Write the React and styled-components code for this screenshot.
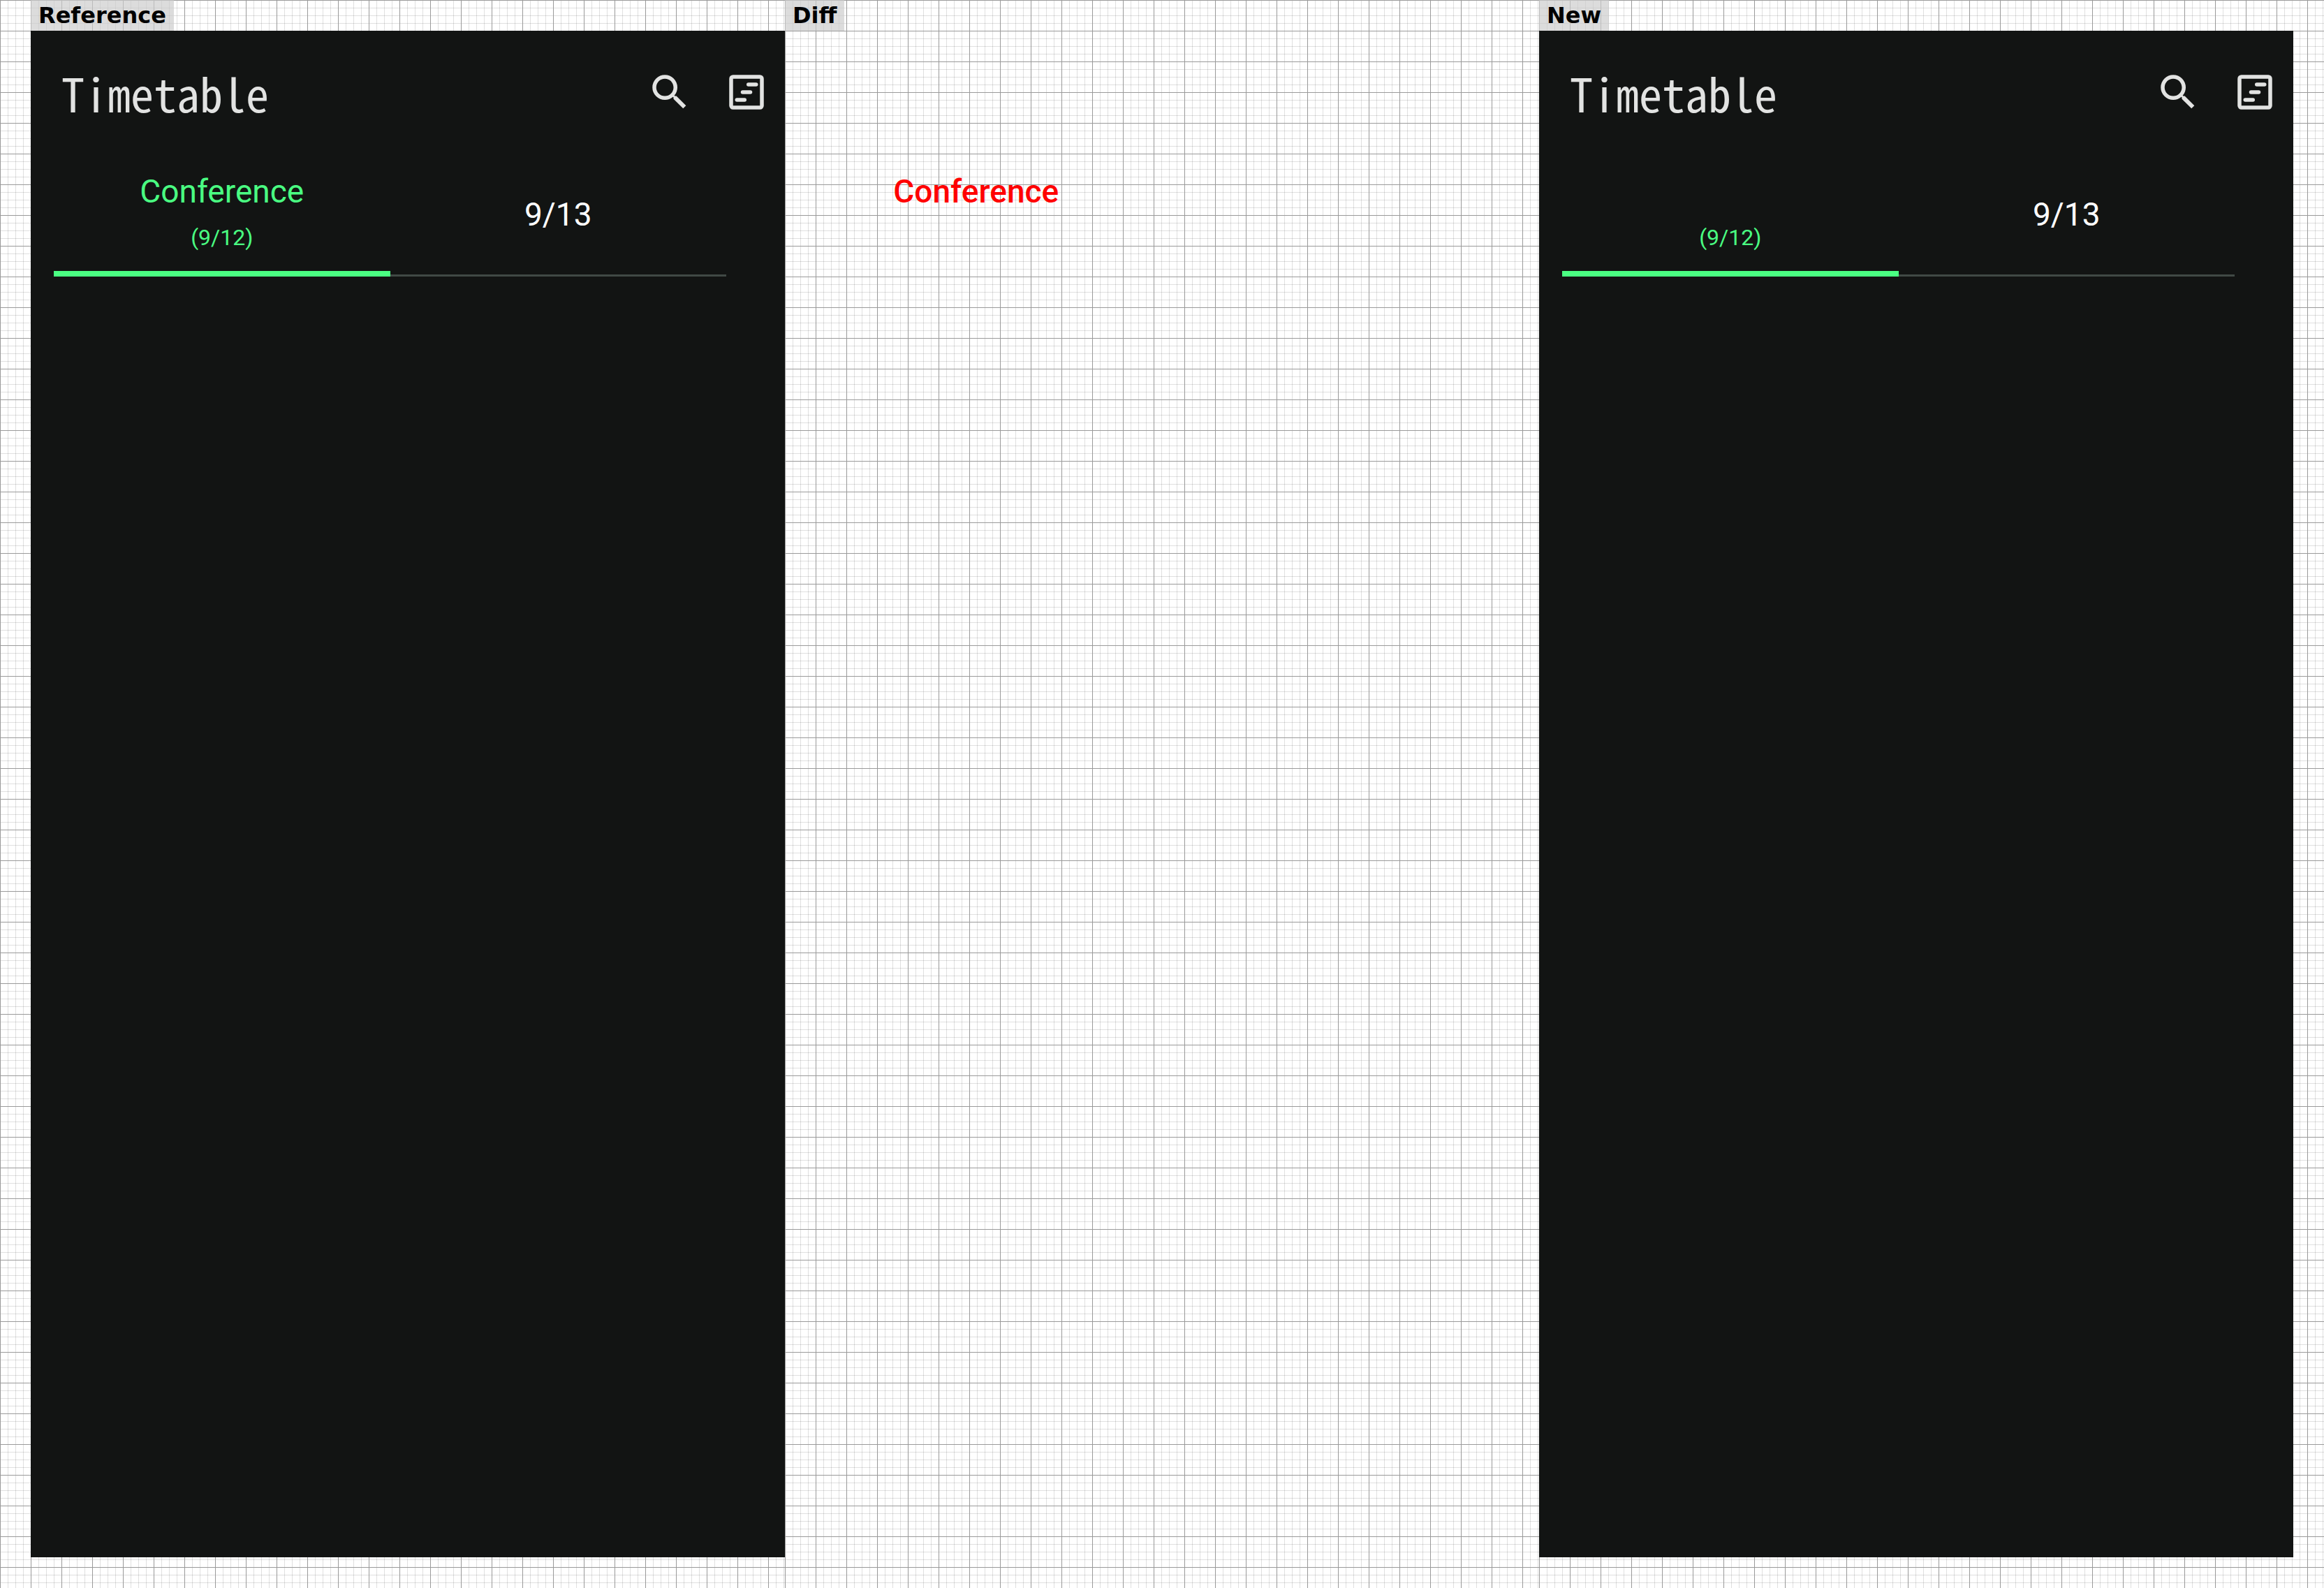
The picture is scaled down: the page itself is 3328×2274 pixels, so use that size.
import React from 'react';
import styled, { createGlobalStyle, css } from 'styled-components';

const color = {
  panel: '#121413',
  ink: '#e2e3e2',
  green: '#4aff82',
  divider: '#404945',
  red: '#ff0000',
};

const GlobalStyle = createGlobalStyle`
  *, *::before, *::after { box-sizing: border-box; }
  body { margin: 0; background: #fff; }
`;

const Page = styled.main`
  display: flex;
  min-height: 100vh;
  font-family: Roboto, sans-serif;
`;

const Column = styled.section`
  flex: 1 1 0;
  min-width: 0;
  display: flex;
  flex-direction: column;
  padding-bottom: 44px;
  padding-left: ${(p) => (p.$first ? 44 : 0)}px;
  padding-right: ${(p) => (p.$last ? 44 : 0)}px;
  background-color: #fff;
  background-image:
    linear-gradient(to right, #9a9a9a 1px, transparent 1px),
    linear-gradient(to bottom, #9a9a9a 1px, transparent 1px),
    linear-gradient(to right, rgba(0, 0, 0, 0.12) 1px, transparent 1px),
    linear-gradient(to bottom, rgba(0, 0, 0, 0.12) 1px, transparent 1px);
  background-size: 44px 44px, 44px 44px, 11px 11px, 11px 11px;
`;

const Caption = styled.h2`
  align-self: flex-start;
  margin: 0;
  padding: 0 11px;
  background: rgba(204, 204, 204, 0.68);
  color: #000;
  font: bold 32px/44px 'DejaVu Sans', sans-serif;
`;

const Screen = styled.div`
  flex: 1;
  display: flex;
  flex-direction: column;
  background: ${(p) => (p.$blank ? 'transparent' : color.panel)};
`;

const Header = styled.header`
  display: flex;
  align-items: center;
  height: 175px;
  padding: 33px 0 32px 44px;
`;

const Title = styled.h1`
  flex: 1;
  margin: 0;
  color: ${color.ink};
  font: 400 66px/110px 'Noto Sans CJK JP', monospace;
  font-feature-settings: 'hwid' 1;
`;

const IconButton = styled.button`
  display: grid;
  place-items: center;
  width: 110px;
  height: 110px;
  padding: 0;
  border: 0;
  background: none;
  color: ${color.ink};

  svg {
    width: 66px;
    height: 66px;
    fill: currentColor;
  }
`;

const Tabs = styled.div`
  display: grid;
  grid-template-columns: 1fr 1fr;
  margin: 0 84px 0 33px;
  ${(p) => !p.$blank && css`box-shadow: inset 0 -3px ${color.divider};`}
`;

const tabBox = css`
  display: flex;
  flex-direction: column;
  align-items: center;
  justify-content: center;
  padding: 22px 0 15px;
  border: 0;
  border-bottom: 8px solid transparent;
  background: none;
  font-family: inherit;
`;

const Tab = styled.button`
  ${tabBox}
  color: ${(p) => (p.$selected ? color.green : '#fff')};
  border-bottom-color: ${(p) => (p.$selected ? color.green : 'transparent')};
`;

const DiffTab = styled.div`
  ${tabBox}
  color: ${color.red};
`;

const TabName = styled.span`
  min-height: 66px;
  font-size: 46px;
  font-weight: ${(p) => (p.$strong ? 500 : 400)};
  line-height: 66px;
`;

const TabDate = styled.span`
  min-height: 66px;
  font-size: 32px;
  line-height: 66px;
`;

function SearchIcon() {
  return (
    <svg viewBox="0 0 24 24" aria-hidden="true">
      <path d="M15.5 14h-.79l-.28-.27A6.47 6.47 0 0 0 16 9.5 6.5 6.5 0 1 0 9.5 16c1.61 0 3.09-.59 4.23-1.57l.27.28v.79l5 4.99L20.49 19l-4.99-5zm-6 0C7.01 14 5 11.99 5 9.5S7.01 5 9.5 5 14 7.01 14 9.5 11.99 14 9.5 14z" />
    </svg>
  );
}

function TimelineIcon() {
  return (
    <svg viewBox="0 0 24 24" aria-hidden="true">
      <path
        fillRule="evenodd"
        d="M5 3h14a2 2 0 0 1 2 2v14a2 2 0 0 1-2 2H5a2 2 0 0 1-2-2V5a2 2 0 0 1 2-2zm0 2v14h14V5z"
      />
      <rect x="12" y="7" width="6" height="2" rx="1" />
      <rect x="9" y="11" width="6" height="2" rx="1" />
      <rect x="6" y="15" width="6" height="2" rx="1" />
    </svg>
  );
}

function TimetableScreen({ firstTab }) {
  return (
    <Screen>
      <Header>
        <Title>Timetable</Title>
        <IconButton type="button" aria-label="Search">
          <SearchIcon />
        </IconButton>
        <IconButton type="button" aria-label="Switch layout">
          <TimelineIcon />
        </IconButton>
      </Header>
      <Tabs role="tablist">
        <Tab type="button" role="tab" aria-selected="true" $selected>
          <TabName>{firstTab}</TabName>
          <TabDate>(9/12)</TabDate>
        </Tab>
        <Tab type="button" role="tab" aria-selected="false">
          <TabName>9/13</TabName>
        </Tab>
      </Tabs>
    </Screen>
  );
}

export default function App() {
  return (
    <>
      <GlobalStyle />
      <Page>
        <Column $first>
          <Caption>Reference</Caption>
          <TimetableScreen firstTab="Conference" />
        </Column>
        <Column>
          <Caption>Diff</Caption>
          <Screen $blank>
            <Header as="div" />
            <Tabs $blank>
              <DiffTab>
                <TabName $strong>Conference</TabName>
                <TabDate />
              </DiffTab>
            </Tabs>
          </Screen>
        </Column>
        <Column $last>
          <Caption>New</Caption>
          <TimetableScreen firstTab="" />
        </Column>
      </Page>
    </>
  );
}
